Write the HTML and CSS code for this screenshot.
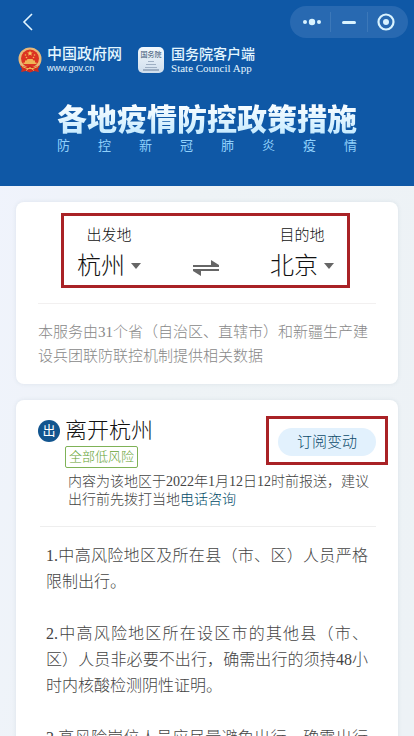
FILE: index.html
```html
<!DOCTYPE html>
<html lang="zh-CN">
<head>
  <meta charset="UTF-8" />
  <meta name="viewport" content="width=device-width, initial-scale=1.0"/>
  <title>各地疫情防控政策措施</title>
  <link rel="stylesheet" href="styles.css">
</head>
<body>

  <header class="header">
    <div class="nav-bar">
      <button type="button" class="back-btn" aria-label="返回">
        <svg width="12" height="18" viewBox="0 0 12 18" fill="none" stroke="#e4f6ff" stroke-width="1.6"><path d="M10 1 L2 9 L10 17"/></svg>
      </button>
      <div class="capsule">
        <button type="button" aria-label="更多">
          <svg width="20" height="20" viewBox="0 0 20 20" fill="#d9f3ff"><circle cx="3" cy="10" r="2"/><circle cx="10" cy="10" r="3.2"/><circle cx="17" cy="10" r="2"/></svg>
        </button>
        <button type="button" aria-label="最小化">
          <svg width="20" height="20" viewBox="0 0 20 20" fill="#d9f3ff"><rect x="3" y="9" width="14" height="3" rx="1.5"/></svg>
        </button>
        <button type="button" aria-label="关闭">
          <svg width="20" height="20" viewBox="0 0 20 20"><circle cx="10" cy="10" r="7.5" fill="none" stroke="#d9f3ff" stroke-width="2.2"/><circle cx="10" cy="10" r="3" fill="#d9f3ff"/></svg>
        </button>
      </div>
    </div>

    <div class="brands">
      <div class="brand">
        <svg class="emblem" width="24" height="26" viewBox="0 0 24 26">
          <circle cx="12" cy="12" r="11.5" fill="#e9b878"/>
          <circle cx="12" cy="11.5" r="9" fill="#dc3322"/>
          <path d="M12 3.5l.8 2h2l-1.6 1.3.6 2-1.8-1.2-1.8 1.2.6-2L9.200 5.500h2z" fill="#f6cf63"/>
          <g fill="#f0b850"><circle cx="7.500" cy="8" r=".8"/><circle cx="16.500" cy="8" r=".8"/><circle cx="8.500" cy="10.500" r=".8"/><circle cx="15.500" cy="10.500" r=".8"/></g>
          <path d="M7 15.500v-2h1.500l1-1.500h5l1 1.500H17v2h1.500V17h-13v-1.500z" fill="#efb456"/>
          <path d="M2 18.500c3 .5 5 1.500 7 1.500l3-2 3 2c2 0 4-1 7-1.500l-2 3.500 1 3-5-1-4 1.500L8 24l-5 1 1-3z" fill="#cf2c20"/>
          <path d="M4 19.500l5 2h6l5-2M8 23.500l4-3 4 3" fill="none" stroke="#efb456" stroke-width="1"/>
        </svg>
        <div class="brand-text">
          <strong>中国政府网</strong>
          <span class="site">www.gov.cn</span>
        </div>
      </div>
      <div class="brand">
        <div class="app-icon">
          <b>国务院</b>
          <svg width="20" height="12" viewBox="0 0 20 12" fill="#9fb0c4"><path d="M7 1h6v1H7zM5 4h10v1H5zM4 7h12v1H4zM2 9h16v2H2z"/></svg>
        </div>
        <div class="brand-text app">
          <strong>国务院客户端</strong>
          <span>State Council App</span>
        </div>
      </div>
    </div>

    <h1>各地疫情防控政策措施</h1>
    <p class="subtitle">防控新冠肺炎疫情</p>
  </header>

  <main>
    <section class="card route-card">
      <div class="route">
        <div class="place">
          <label for="from">出发地</label>
          <div class="select-wrap">
            <select id="from"><option>杭州</option><option>北京</option></select>
          </div>
        </div>
        <button type="button" class="swap-btn" aria-label="交换">
          <svg width="28" height="16" viewBox="0 0 28 16" fill="#666"><path d="M1 5h18V0l8 5v2H1zM27 9H1v2l8 5v-5h18z"/></svg>
        </button>
        <div class="place">
          <label for="to">目的地</label>
          <div class="select-wrap">
            <select id="to"><option>北京</option><option>杭州</option></select>
          </div>
        </div>
      </div>
      <p class="source">本服务由31个省（自治区、直辖市）和新疆生产建设兵团联防联控机制提供相关数据</p>
    </section>

    <section class="card policy-card">
      <div class="policy-head">
        <span class="badge">出</span>
        <div class="policy-title">
          <h2>离开杭州</h2>
          <span class="risk">全部低风险</span>
        </div>
        <div class="subscribe">
          <button type="button">订阅变动</button>
        </div>
      </div>
      <p class="notice">内容为该地区于2022年1月12日12时前报送，建议出行前先拨打当地<a href="#">电话咨询</a></p>
      <div class="policy-body">
        <p>1.中高风险地区及所在县（市、区）人员严格限制出行。</p>
        <p>2.中高风险地区所在设区市的其他县（市、区）人员非必要不出行，确需出行的须持48小时内核酸检测阴性证明。</p>
        <p>3.高风险岗位人员应尽量避免出行，确需出行的须持48小时内核酸检测阴性证明。</p>
      </div>
    </section>
  </main>

</body>
</html>
```

FILE: styles.css
```css
* {
  margin: 0;
  padding: 0;
  box-sizing: border-box;
}

body {
  height: 100vh;
  display: flex;
  flex-direction: column;
  overflow: hidden;
  background: linear-gradient(100deg, #f0f3fd, #eef3f6 40%, #edf2f6);
  font-family: "Liberation Serif", "Noto Sans CJK SC", sans-serif;
  font-weight: 300;
  color: #111;
}

button,
select {
  border: none;
  background: none;
  font: inherit;
  color: inherit;
  cursor: pointer;
}

svg {
  display: block;
}

/* header */
.header {
  flex-shrink: 0;
  padding: 6px 6px 32px;
  background: #0f58a6;
  color: #e4f6ff;
}

.nav-bar {
  display: flex;
  justify-content: space-between;
  align-items: center;
}

.back-btn {
  padding: 0 16px;
}

.capsule {
  display: flex;
  align-items: center;
  width: 118px;
  height: 32px;
  padding: 0 4px;
  border-radius: 16px;
  background: #2869b1;
}

.capsule button {
  flex: 1;
  display: flex;
  justify-content: center;
}

.capsule button + button {
  border-left: 1px solid #3c78b9;
}

.brands {
  display: flex;
  gap: 16px;
  margin-top: 8px;
  padding-left: 12px;
}

.brand {
  display: flex;
  align-items: center;
  gap: 5px;
}

.brand-text {
  display: flex;
  flex-direction: column;
  font-size: 11px;
  line-height: 11px;
}

.brand-text strong {
  font-size: 15px;
  line-height: 17px;
  font-weight: 500;
}

.brand-text .site {
  font-family: "Liberation Sans", sans-serif;
  font-size: 9px;
}

.brand-text.app strong {
  font-size: 14px;
}

.app-icon {
  display: flex;
  flex-direction: column;
  align-items: center;
  width: 26px;
  height: 26px;
  margin-right: 2px;
  padding-top: 3px;
  border-radius: 5px;
  background: linear-gradient(#f2f8fd, #cfdeed);
  color: #34506f;
}

.app-icon b {
  font-size: 7px;
  line-height: 10px;
  white-space: nowrap;
}

.header h1 {
  margin-top: 28px;
  text-align: center;
  font-size: 30px;
  line-height: 36px;
  font-weight: 900;
  background: linear-gradient(#fff, #bfe8ff);
  -webkit-background-clip: text;
  background-clip: text;
  color: transparent;
}

.subtitle {
  width: 300px;
  margin: 0 auto;
  font-size: 13px;
  line-height: 16px;
  font-weight: 400;
  text-align-last: justify;
  color: #8fd0fb;
}

/* cards */
main {
  padding: 16px;
}

.card {
  margin-bottom: 16px;
  border-radius: 8px;
  background: #fff;
  box-shadow: 0 0 4px rgba(60, 90, 110, 0.1);
}

.route-card {
  padding: 11px 22px 16px;
}

.route {
  display: flex;
  justify-content: space-between;
  align-items: flex-end;
  margin: 0 26px 0 23px;
  padding: 9px 13px 1px;
  border: 3px solid #a92226;
}

.place {
  display: flex;
  flex-direction: column;
  align-items: center;
  gap: 3px;
}

.place label {
  font-size: 15px;
  line-height: 20px;
}

.select-wrap {
  display: flex;
  align-items: center;
  gap: 6px;
}

.select-wrap::after {
  content: "";
  border: 5px solid transparent;
  border-top: 6px solid #666;
  border-bottom: none;
}

.select-wrap select {
  appearance: none;
  font-size: 24px;
  line-height: 36px;
}

.swap-btn {
  padding-bottom: 8px;
}

.source {
  margin-top: 15px;
  padding-top: 16px;
  border-top: 1px solid #f2f0f0;
  font-size: 15px;
  line-height: 24px;
  color: #888;
}

.policy-card {
  padding: 16px 10px 16px 22px;
}

.policy-head {
  display: flex;
  align-items: flex-start;
}

.badge {
  width: 22px;
  height: 22px;
  margin: 4px 5px 0 0;
  border-radius: 50%;
  background: #12558f;
  color: #fff;
  font-size: 13px;
  line-height: 22px;
  font-weight: 400;
  text-align: center;
}

.policy-title {
  flex: 1;
}

.policy-title h2 {
  font-size: 22px;
  line-height: 30px;
  font-weight: 300;
}

.risk {
  display: block;
  width: fit-content;
  padding: 0 3px;
  border: 1px solid #7fb257;
  border-radius: 2px;
  font-size: 13px;
  line-height: 20px;
  color: #65a333;
}

.subscribe {
  padding: 9px 9px 6px;
  border: 3px solid #a92226;
}

.subscribe button {
  display: block;
  width: 98px;
  border-radius: 14px;
  background: #e2f1fd;
  font-size: 15px;
  line-height: 28px;
  color: #0c4a6a;
}

.notice {
  margin: 5px 12px 0 30px;
  font-size: 14px;
  line-height: 18px;
  color: #444;
}

.notice a {
  color: #004a68;
  text-decoration: none;
}

.policy-body {
  margin: 17px 12px 0 2px;
  padding: 16px 8px 0 6px;
  border-top: 1px solid #eee;
  font-size: 16px;
  line-height: 26px;
  text-align: justify;
  color: #444;
}

.policy-body p {
  margin-bottom: 26px;
}
```
